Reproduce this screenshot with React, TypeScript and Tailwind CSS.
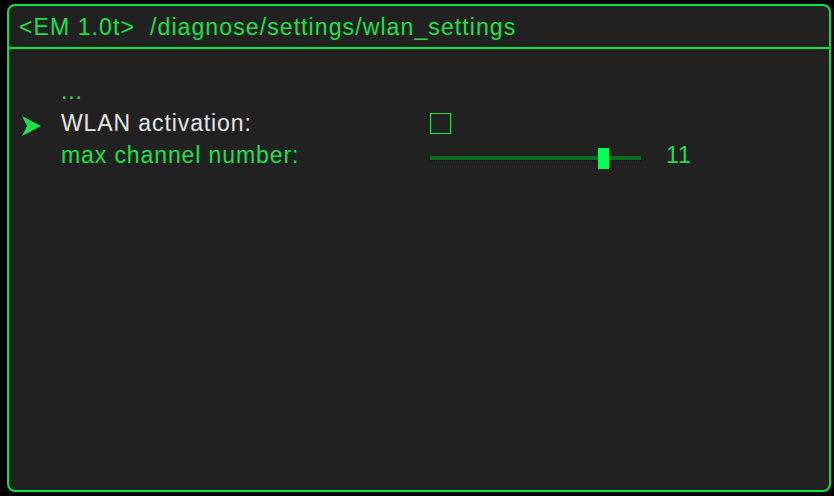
const font = { fontFamily: '"Liberation Sans", Arial, sans-serif' };

function Arrow() {
  return (
    <svg width="21" height="20" viewBox="0 0 21 20" aria-hidden="true">
      <polygon points="2,0 21,10 2,20 7,10" fill="#1fe04a" />
    </svg>
  );
}

function Slider({ value, max }: { value: number; max: number }) {
  const pct = (value / max) * 100;
  return (
    <div className="relative mt-[9px] h-[22px] w-[211px]">
      <div className="absolute left-0 right-0 top-[8px] h-[4px] bg-[#0b6b1f]" />
      <div className="absolute left-0 right-0 top-[12px] border-b border-dotted border-[#0d0d0d]" />
      <div
        className="absolute top-0 h-[21px] w-[11px] bg-[#00ff55]"
        style={{ left: `calc(${pct}% - 5px)` }}
      />
    </div>
  );
}

export default function App() {
  return (
    <div
      className="flex h-[496px] w-[834px] bg-black pb-[4px] pl-[7px] pr-[3px] pt-[4px]"
      style={font}
    >
      <div className="flex flex-1 flex-col overflow-hidden rounded-[8px] border-2 border-[#00e64a] bg-[#212121]">
        <div className="flex h-[43px] items-center border-b-2 border-[#00e64a] pl-[10px] pt-[2px] text-[23px] tracking-[1.1px] text-[#1fe04a]">
          {'<EM 1.0t>\u00a0\u00a0/diagnose/settings/wlan_settings'}
        </div>

        <div className="flex flex-col pt-[26px] text-[23px] leading-[32px] tracking-[0.9px]">
          <div className="flex h-[32px]">
            <div className="w-[52px]" />
            <div className="text-[#1fe04a]">...</div>
          </div>

          <div className="flex h-[32px] items-center">
            <div className="flex w-[52px] items-center pl-[11px] pt-[6px]">
              <Arrow />
            </div>
            <div className="w-[369px] text-[#e6e6e6]">WLAN activation:</div>
            <div className="h-[21px] w-[21px] border-[1.5px] border-[#1fe04a]" />
          </div>

          <div className="flex h-[32px] items-start">
            <div className="w-[52px]" />
            <div className="w-[369px] text-[#1fe04a]">max channel number:</div>
            <Slider value={11} max={13.4} />
            <div className="ml-[25px] text-[#1fe04a]">11</div>
          </div>
        </div>
      </div>
    </div>
  );
}
